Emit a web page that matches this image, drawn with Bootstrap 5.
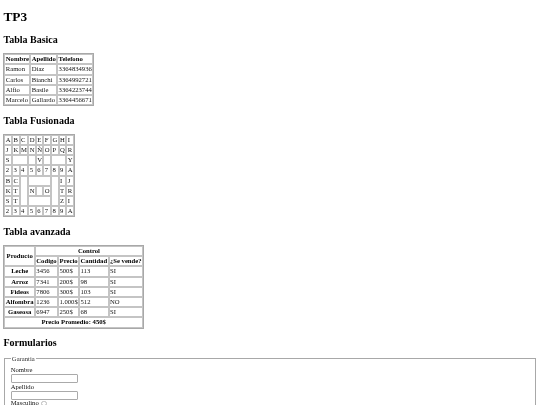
<!DOCTYPE html>
<html lang="es"><head><meta charset="utf-8"><title>TP3</title>
<link href="https://cdn.jsdelivr.net/npm/bootstrap@5.3.0/dist/css/bootstrap.min.css" rel="stylesheet">
<style>
html,body{margin:0;height:405px;overflow:hidden}
body{background:#fff;color:#000;font-family:"Liberation Serif",serif;font-size:6.67px;line-height:normal;padding:0 3.4px;filter:blur(.22px)}
h1,h2{font-family:"Liberation Serif",serif;font-weight:700;line-height:normal;color:#000}
h1{font-size:13.34px;margin:9px 0 8.9px}
h2{font-size:10px;margin:8.3px 0}
table.tp{border-collapse:separate;border-spacing:0;border:1px solid #a8a8a8;color:#111;margin:.2px 0 0}
table.tp td,table.tp th{border:1px solid #c4c4c4;padding:0 .4px;line-height:8.2px;height:10.2px;font-weight:400}
table.tp th{font-weight:700;color:#000;text-align:center}
table.tp th.izq{text-align:left}
fieldset.gar{border:1px solid #a8a8a8;padding:3.4px 5.6px 0;margin:-1.5px .7px 0;min-width:0;height:80px}
fieldset.gar legend{float:none;width:auto;font-size:6.67px;margin:0 0 0 .4px;padding:0 .8px;line-height:8px;color:#333}
.lin{color:#111;line-height:8px}
.ent{display:block;width:67px;height:9px;border:1px solid #aaa;border-radius:1px;background:#fff;margin:0 0 -.5px}
.rad{display:inline-block;width:5.5px;height:5.5px;border:1px solid #bbb;border-radius:50%;margin-left:1px;vertical-align:-1px}
</style></head><body>
<h1>TP3</h1>
<h2>Tabla Basica</h2>
<table class="tp">
<tr><th class="izq">Nombre</th><th class="izq">Apellido</th><th class="izq">Telefono</th></tr>
<tr><td>Ramon</td><td>Diaz</td><td>3364834936</td></tr>
<tr><td>Carlos</td><td>Bianchi</td><td>3364992721</td></tr>
<tr><td>Alfio</td><td>Basile</td><td>3364223744</td></tr>
<tr><td>Marcelo</td><td>Gallardo</td><td>3364456671</td></tr>
</table>
<h2>Tabla Fusionada</h2>
<table class="tp">
<tr><td>A</td><td>B</td><td>C</td><td>D</td><td>E</td><td>F</td><td>G</td><td>H</td><td>I</td></tr>
<tr><td>J</td><td>K</td><td>M</td><td>N</td><td>Ñ</td><td>O</td><td>P</td><td>Q</td><td>R</td></tr>
<tr><td>S</td><td colspan="2"></td><td></td><td>V</td><td></td><td colspan="2"></td><td>Y</td></tr>
<tr><td>2</td><td>3</td><td>4</td><td>5</td><td>6</td><td>7</td><td>8</td><td>9</td><td>A</td></tr>
<tr><td>B</td><td>C</td><td rowspan="3"></td><td colspan="3"></td><td rowspan="3"></td><td>I</td><td>J</td></tr>
<tr><td>K</td><td>T</td><td>N</td><td></td><td>O</td><td>T</td><td>R</td></tr>
<tr><td>S</td><td>T</td><td colspan="3"></td><td>Z</td><td>I</td></tr>
<tr><td>2</td><td>3</td><td>4</td><td>5</td><td>6</td><td>7</td><td>8</td><td>9</td><td>A</td></tr>
</table>
<h2>Tabla avanzada</h2>
<table class="tp">
<tr><th rowspan="2">Producto</th><th colspan="4">Control</th></tr>
<tr><th>Codigo</th><th>Precio</th><th>Cantidad</th><th>¿Se vende?</th></tr>
<tr><th>Leche</th><td>3456</td><td>500$</td><td>113</td><td>SI</td></tr>
<tr><th>Arroz</th><td>7341</td><td>200$</td><td>98</td><td>SI</td></tr>
<tr><th>Fideos</th><td>7806</td><td>300$</td><td>103</td><td>SI</td></tr>
<tr><th>Alfombra</th><td>1236</td><td>1.000$</td><td>512</td><td>NO</td></tr>
<tr><th>Gaseosa</th><td>6947</td><td>250$</td><td>68</td><td>SI</td></tr>
<tr><th colspan="5">Precio Promedio: 450$</th></tr>
</table>
<h2>Formularios</h2>
<fieldset class="gar"><legend>Garantia</legend>
<div class="lin">Nombre</div><span class="ent"></span>
<div class="lin">Apellido</div><span class="ent"></span>
<div class="lin">Masculino <span class="rad"></span></div>
</fieldset>
</body></html>
